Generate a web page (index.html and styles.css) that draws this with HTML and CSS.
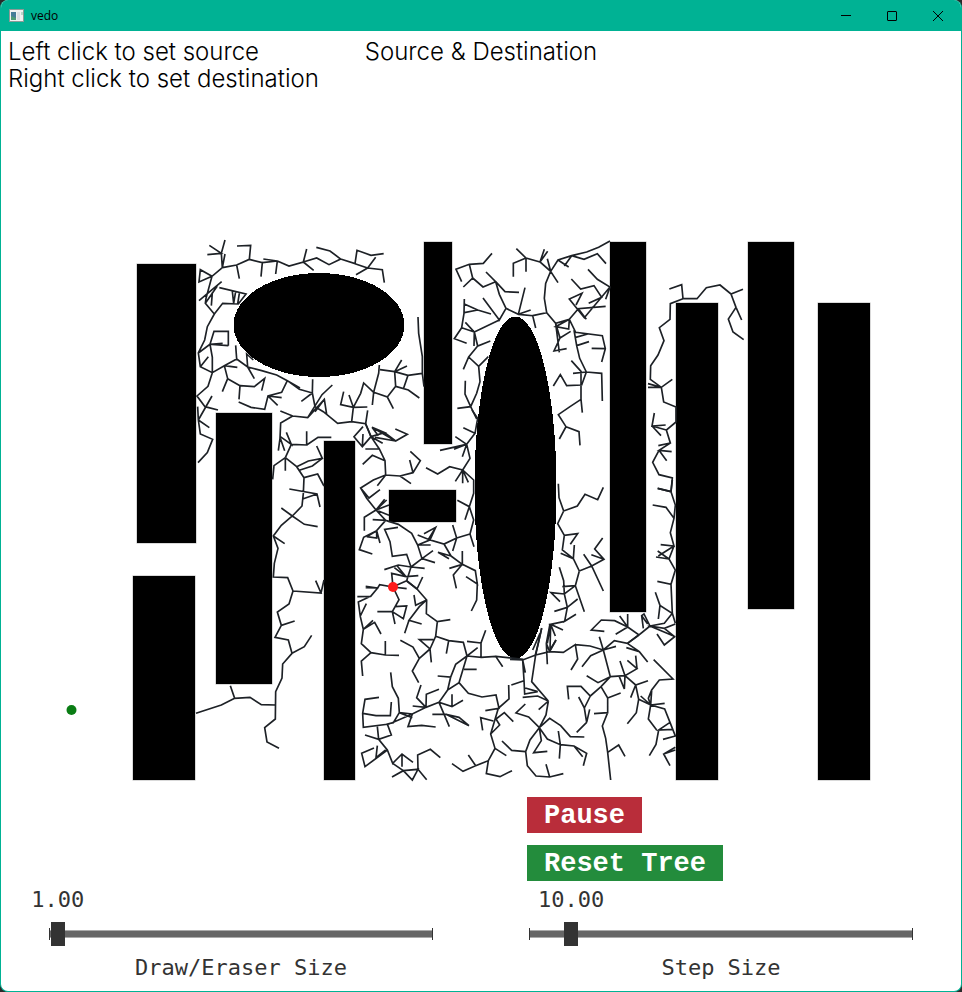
FILE: index.html
```html
<!DOCTYPE html>
<html lang="en">
<head>
<meta charset="utf-8">
<meta name="viewport" content="width=device-width, initial-scale=1">
<title>vedo</title>
<link rel="stylesheet" href="styles.css">
</head>
<body>
<div class="window">
  <header class="titlebar">
    <svg class="app-icon" viewBox="0 0 16 14" aria-hidden="true">
      <rect x="0" y="0" width="15" height="13" fill="#8c9a97"/>
      <rect x="1" y="1" width="13" height="11" fill="#f1f1f1"/>
      <rect x="2" y="3" width="5" height="8" fill="#467c98"/>
      <path d="M2 11V7l5 2v2z" fill="#4f9b75"/>
      <rect x="8" y="3" width="3" height="8" fill="#dcdfe4"/>
      <rect x="12" y="3" width="2" height="3" fill="#b9d6ca"/>
    </svg>
    <span class="app-name">vedo</span>
    <button class="win-button" type="button" aria-label="Minimize"><svg viewBox="0 0 12 12"><path d="M1 5.500h10"/></svg></button>
    <button class="win-button" type="button" aria-label="Maximize"><svg viewBox="0 0 12 12"><rect x="1.500" y="1.500" width="9" height="9" rx=".5"/></svg></button>
    <button class="win-button" type="button" aria-label="Close"><svg viewBox="0 0 12 12"><path d="M1 1l10 10M11 1L1 11"/></svg></button>
  </header>
  <main class="content">
    <div class="captions">
      <p>Left click to set source<br>Right click to set destination</p>
      <h1>Source &amp; Destination</h1>
    </div>
    <svg class="scene" viewBox="1 92 960 698" role="img" aria-label="Search tree growing between obstacles">
      <g class="obstacles">
        <rect x="137" y="264" width="59" height="279"/>
        <rect x="133" y="576" width="62" height="204"/>
        <rect x="216" y="413" width="56" height="271"/>
        <rect x="324" y="441" width="31" height="339"/>
        <rect x="424" y="242" width="28" height="202"/>
        <rect x="389" y="490" width="67" height="32"/>
        <rect x="610" y="242" width="36" height="370"/>
        <rect x="676" y="303" width="42" height="477"/>
        <rect x="748" y="242" width="46" height="367"/>
        <rect x="818" y="303" width="52" height="477"/>
        <ellipse cx="319" cy="325" rx="85.500" ry="52"/>
        <ellipse cx="515.500" cy="487.500" rx="41" ry="171"/>
      </g>
      <g class="tree">
        <path transform="translate(190 230) scale(.33333)" d="M58 46L94 70L52 74M105 30L94 70L97 113M105 72L97 113L140 105L178 88L182 46L141 48M140 105L148 146M178 88L217 98L213 140M217 98L262 93L220 87M262 93L257 132M262 93L297 108L340 96L350 57M340 96L371 121M340 96L380 84L417 104L452 87L420 63L379 52M452 87L495 101L501 61L543 76L581 71M495 101L533 114L557 82M533 114L498 134M533 114L577 119L583 158
        M97 113L66 139L31 119L27 156L66 139L48 205L46 220L73 252L52 290L44 330L25 369L31 410L67 428L103 407L140 387L137 346M95 155L27 212M82 168L46 220M67 188L64 227M88 173L168 192L145 222L98 220L73 252M127 184L131 220L137 184M148 190L143 222M115 347L60 343L72 304L115 304L115 347M60 343L98 340M25 369L60 343L67 382V428M55 380L31 410
        M67 428L54 469L21 498L45 530L84 540M66 498L25 570M23 530L25 570L58 593M25 570L31 612L68 628L52 668L24 698M103 407L142 412M103 407L113 446L97 485M113 446L150 467L147 508M150 467L193 470L224 445L215 482
        M140 387L173 411L170 372L190 390M173 411L193 446M173 411L215 422L260 435L292 452L330 474M292 452L328 478L367 489L368 448M367 489L334 514M292 452L275 487L234 498L224 538L183 532L146 516M234 498L263 526M234 498L275 503M367 489L375 530L400 545L443 580L485 575L527 581L543 620
        M427 465L396 494L353 563L308 558L271 543M308 558L272 579L270 625L265 662M353 563L403 508L410 553M403 508L375 545M485 575L490 532L477 495M532 531L490 532L452 524L461 485M490 532L512 490L521 459L551 487L547 525M551 487L592 501L610 536M592 501L617 469L614 425L635 390M614 425L651 408M570 419L614 425L654 436L641 474M654 436L697 430M617 469L655 480L688 504M568 405L566 430L551 487M684 261L686 310L697 380L697 430L702 470M527 581L533 541M271 625L284 662M271 620L304 643L289 607M304 643L350 645L350 604M350 645L384 622L424 622M304 643L286 683"/>
        <path transform="translate(190 430) scale(.33333)" d="M286 83V122M286 83L252 107L248 148M286 83L320 110L342 143L340 190L336 228L307 258L274 286L250 318L264 355L253 400L250 441L293 443L309 483L297 522L262 546L274 586L314 573M274 586L255 622L295 630L306 670L343 650L365 616M306 670L278 702L276 744L257 785L256 867L224 893L231 936L267 955M256 825L214 824L180 802L134 805L121 767M134 805L94 825L18 850M342 143L383 132L402 168M298 177L381 192L390 231M381 192L340 206M320 110L355 93L397 85L380 48M397 85L367 108L328 121M274 234L307 258L343 283L383 290M250 318L284 341M309 483L393 489L377 452M393 489L402 450"/>
        <path transform="translate(410 230) scale(.33333)" d="M155 155L138 118L178 103L220 100L246 70M178 103L188 144L160 171M188 144L219 171L257 155L228 126M257 155L285 185L327 187M257 155L268 193L288 235L325 253L345 173M325 253L362 240M288 235L268 270L219 204M268 270L193 306L166 277M193 306L155 293L162 250L163 207M163 222L203 240L243 252M203 240L163 248M155 293L133 326L170 340M193 306L192 348M193 306L203 348L241 333M203 348L176 381L160 418M176 381L206 409L235 380M206 409L210 455L200 490L182 530L142 535M182 530L165 492L166 452M182 530L200 567
        M325 253L368 257L377 294M368 257L410 248L437 280L478 268M410 248L403 205L407 160L422 124L390 96L403 58M390 96L413 64M390 96L348 84L319 56M348 84V125M348 84L310 100V140M422 124L444 158M412 86L422 124L440 152M422 124L444 90L485 77L530 66L566 52L600 33M485 77L522 88L562 71L588 101M485 77L463 108M444 90L476 111M534 118L562 148L600 171L587 208M484 147L512 177L552 167L575 202L536 220M600 171L523 263L478 207L516 190L498 225M529 268L505 236L587 229M505 236L478 268
        M437 280L450 324L432 363L470 356M437 280L448 367M478 268L437 290L476 297L478 268M482 304L450 324M478 268L497 307L577 317L586 356L575 396M586 356L545 355M497 322L533 312M500 347L537 335M492 300L500 347L509 385L529 426L515 465L470 467L451 434L430 468M489 430L529 426L575 430L577 513M484 392L513 424V508L517 548M513 508L480 530L445 554L468 590L448 627M468 590L507 605L510 646"/>
        <path transform="translate(540 270) scale(.33333)" d="M388 57L425 44L429 86L391 101L390 148L358 173L372 212L354 255L332 287L331 328L364 352L397 328M324 341L364 352L324 352M364 352L371 396L408 411V456L379 480L391 519L355 527M343 429L336 468L377 465M336 468L379 480M336 468L363 497M391 519L357 541L395 545M357 541L380 572M357 541L338 577L357 614L397 624L393 665L353 655M429 86L471 86L499 53L540 45L573 72L609 58M573 72L588 112L605 150M588 112L565 147L579 186L611 209"/>
        <path transform="translate(520 480) scale(.33333)" d="M398 75L438 82L462 115M413 25L453 35L457 0M453 35L466 75L462 115L451 158L462 198L422 194M462 198L415 228M408 231L447 237L413 213M462 198L447 237L466 270L453 313L412 304M453 313L457 400L420 376L406 337M420 376L415 417M457 400L466 430M457 400L433 430L390 438L466 470M390 438L433 445L466 432M433 445L464 470L433 495L411 462M390 438L372 402L365 407L370 445M365 407L383 432M390 438L357 465L323 441V402M323 441L287 463M323 441L299 408M323 441L284 422L244 420L214 450L253 454M357 465L323 490
        M115 11L117 53L131 93L172 78L195 43L233 59L250 22M131 93L113 131L133 166L173 161L151 193M133 166L127 210L160 236L163 195M122 220L160 236L178 273L215 258L252 238L224 207L248 174M252 238L214 224M191 223L215 258L250 333M178 273L166 317L193 395M166 317L127 320M166 317L133 342L93 338L120 365M118 262L131 302L133 342L142 382L173 357M142 382L103 394M142 382L134 424L168 403M134 424L92 433L129 450M92 433L106 468M92 433L82 490M92 433L90 510L108 480M65 444L56 485L46 525M38 510L60 460"/>
        <path transform="translate(510 620) scale(.33333)" d="M0 118L38 120L77 105L119 95L160 97L196 74L203 117L183 150M196 74L240 78L280 90L318 79M280 90L242 107L216 140M280 90L268 50M280 90L301 170L273 200L241 228L213 199H172L176 238M280 90L313 62L352 70L384 46M352 70L388 95L413 126M349 83L388 95M301 170L264 188L230 167M301 170L345 167L381 146L352 121M381 146L377 107M345 167L330 123M345 167L343 207L328 170M345 167L377 195L414 182M377 195L362 233M377 195L386 238L379 278L352 311M386 238L422 255L464 250M392 228L422 255L415 235L425 210L448 180L489 177L431 119M422 255L425 212M422 255L415 297L440 330M422 255L464 267L480 307L496 348L459 358M480 307L446 330L489 328M446 330L438 373L418 407M496 382L461 402L480 437M496 390L461 402
        M273 200L293 234L332 219M293 234V278L252 281M293 278L277 318L287 355L293 397L302 480M293 397L326 375L345 409M241 228L223 264L206 231M223 264L230 307L239 268M230 307L200 337M38 120L46 158M38 120L42 180L44 222L83 215L46 204M4 195L42 182M38 232L83 228L115 243L65 185L77 105L95 25M119 95L109 70L112 133M109 70L120 12M119 95L138 60M115 243L86 269M115 243L108 285L88 323L56 291L18 279L46 252M88 323L119 295L152 317L181 350L223 351M88 323L94 362L71 398L112 394M88 323L112 357L151 374L145 333M151 374L148 416M151 374L192 378L230 400L220 437M192 378L218 410M88 323L60 360L47 395L52 437L78 468L119 471L160 461M119 471L108 433"/>
        <path transform="translate(350 570) scale(.33333)" d="M47 49L83 54L89 44L129 51L170 56M47 53L83 54M22 80L62 79L83 54M62 79L25 96L31 140L40 178L69 151M49 101L31 138M40 178L74 157L93 192M40 178L34 221L63 248L106 255L147 256M106 255V213M63 248L34 273L38 318M129 51L147 89L127 125H82M127 125L135 162M127 125L160 146L170 108L134 110M170 33L201 57L218 21M201 57L230 90L229 131L262 155L301 149M262 155L257 199L240 237L208 209H250M240 237L244 277M240 237L208 265L189 231L151 211M208 265L187 303L206 338M230 90L197 106L192 75M230 90L208 110L177 151L215 162M177 151L164 190
        M257 199L296 212L289 251M296 212L340 217L351 258L383 233M351 258L393 262V219L407 181M393 219L351 214M393 262L437 259L458 290M437 259L520 268M351 258L317 283L302 321L263 318M302 321L293 360L327 338L351 258M342 298H380M327 338L355 370L396 381L438 375L447 415L406 422M293 360L267 397L306 410L339 391M306 410V373M267 397L298 470M247 433H288L327 442L357 467M288 433L357 467
        M267 397L228 412L188 408M228 412L200 383L213 345M228 412L229 373L267 358M228 412L187 432L148 428L145 385L127 350L122 307M187 432L118 462L40 472L38 430L45 388L87 382M38 430L78 437H121L124 396M187 432L174 470L215 466L257 471M148 428L130 458L112 462L124 495L86 508L45 495M82 470L86 508L112 540L128 580L156 552L189 577M156 552V590M112 540L45 590L35 550L72 534M82 527L78 563L107 540M128 580L160 602L204 598L187 630L160 602L126 621M204 598L230 629M204 598L203 555L241 538L271 563M148 428L187 443
        M306 581L339 604L377 587L355 555M377 587L415 572L435 535L422 492L445 415L477 387L476 345M415 572L409 611L450 620L486 602M435 535L469 557M422 492L449 465L438 447L463 428L490 455M430 453L392 443L398 481M456 513L485 541L527 545"/>
        <path transform="translate(350 410) scale(.33333)" d="M46 40L63 80L88 117L105 152L107 195L150 198L189 188L211 152L181 124M189 188L179 150M150 198L183 221M107 195L82 227M107 195L70 210L32 234L57 264L90 239M32 234L50 265L78 300L110 270M78 300L104 268M78 300L43 322V362M78 300L107 331L68 329M78 300L117 316M78 300L117 285M107 331L80 362L41 382L28 419L67 432M80 362L90 399M50 380L80 362V384L50 380M105 152L67 136L38 163M88 117L46 117M63 80L98 100M63 80L37 110L12 80L39 50M37 110L39 72M63 80L104 68L66 52L137 93L172 73L136 57M104 68L137 93L75 82M66 52L85 77
        M107 331L145 343L185 370L203 405L216 446L255 458M203 405H242M216 446L249 422M216 446L183 471L224 475M183 471L170 433L127 439L120 395L104 358L144 352M183 471L145 465L103 479M183 471L170 512M140 466L168 500L133 473M168 500L205 497M170 512L129 530L125 490L168 500M170 512L201 537M203 375L240 390L257 352L222 371M257 352L235 388M203 405L240 390L282 402L320 384L308 345M320 384L308 423M320 384L360 372L372 410M360 372L371 330L358 290L322 271M358 290L345 329M358 290L371 250V210L338 180L299 170L263 192L228 173M338 180L316 214M338 180V220M338 180L355 217M338 180L360 145L350 103L270 121M350 103L316 80M350 103L337 140M350 103L312 118M350 103L375 70L340 53M375 70L383 25L366 0
        M282 402L303 438L264 427L297 446M303 438L337 463V423M337 463L298 475M337 463L310 495L319 535M337 463L376 482L382 522L348 500M382 522L380 570L364 603"/>
      </g>
      <circle class="source" cx="393" cy="587" r="5"/>
      <circle class="destination" cx="71.500" cy="710" r="5"/>
    </svg>
    <div class="controls">
      <div class="actions">
        <button class="action pause" type="button">Pause</button>
        <button class="action reset" type="button">Reset Tree</button>
      </div>
      <div class="slider">
        <output for="draw-size" style="--pos: .005">1.00</output>
        <input id="draw-size" type="range" min="0" max="200" value="1">
        <label for="draw-size">Draw/Eraser Size</label>
      </div>
      <div class="slider">
        <output for="step-size" style="--pos: .095">10.00</output>
        <input id="step-size" type="range" min="1" max="96" value="10">
        <label for="step-size">Step Size</label>
      </div>
    </div>
  </main>
</div>
</body>
</html>
```
FILE: styles.css
```css
* {
  box-sizing: border-box;
}

body {
  margin: 0;
  background: #2a2a2a;
}

.window {
  display: flex;
  flex-direction: column;
  min-height: 100vh;
  overflow: hidden;
  border: 1px solid #00b294;
  border-top: 0;
  border-radius: 8px;
  background: #fff;
}

.titlebar {
  display: flex;
  align-items: center;
  height: 31px;
  padding-left: 8px;
  background: #00b294;
}

.app-icon {
  width: 16px;
  height: 14px;
}

.app-name {
  flex: 1;
  margin-left: 6px;
  font: 12px "Open Sans", "Noto Sans", sans-serif;
  color: #000;
}

.win-button {
  display: flex;
  align-items: center;
  justify-content: center;
  width: 46px;
  height: 30px;
  padding: 0;
  border: 0;
  background: none;
}

.win-button svg {
  width: 12px;
  height: 12px;
  fill: none;
  stroke: #000;
}

.content {
  flex: 1;
}

.captions {
  display: grid;
  grid-template-columns: 1fr auto 1fr;
  height: 61px;
  padding: 7px 7px 0;
  font: 300 24px/27px Inter, sans-serif;
  color: #000;
  white-space: nowrap;
}

.captions p,
.captions h1 {
  margin: 0;
  font: inherit;
}

.scene {
  display: block;
  width: 100%;
  height: auto;
}

.obstacles {
  fill: #000;
  stroke: #b4b4b4;
  stroke-width: 1;
  paint-order: stroke;
}

.obstacles ellipse {
  stroke: none;
  shape-rendering: crispEdges;
}

.tree {
  fill: none;
  stroke: #1d2126;
  stroke-width: 5;
}

.source {
  fill: #ff1a1a;
}

.destination {
  fill: #0a7d14;
}

.controls {
  display: grid;
  grid-template-columns: 1fr 1fr;
  column-gap: 96px;
  padding: 7px 48px 8px;
}

.actions {
  display: flex;
  flex-direction: column;
  align-items: flex-start;
  grid-column: 2;
  gap: 12px;
  margin-left: -2px;
}

.action {
  height: 36px;
  padding: 2px 17px 0;
  border: 0;
  font: bold 27px/34px "Liberation Mono", monospace;
  color: #fff;
}

.pause {
  background: #b92d3a;
}

.reset {
  background: #238c3c;
}

.slider {
  display: flex;
  flex-direction: column;
  font: 22px/28px "DejaVu Sans Mono", monospace;
  color: #333;
}

.slider output {
  width: fit-content;
  margin: 5px 0 8px calc(7px + (100% - 14px) * var(--pos));
  transform: translateX(-50%);
}

.slider input {
  width: 100%;
  height: 24px;
  margin: 0;
  appearance: none;
  background:
    linear-gradient(#333, #333) left center / 1px 12px no-repeat,
    linear-gradient(#333, #333) right center / 1px 12px no-repeat,
    linear-gradient(#666, #666) center / 100% 6px no-repeat,
    linear-gradient(#aaa, #aaa) center / 100% 8px no-repeat;
}

.slider input::-webkit-slider-thumb {
  appearance: none;
  width: 14px;
  height: 24px;
  border-radius: 0;
  background: #333;
}

.slider label {
  align-self: center;
  margin-top: 8px;
}
```
